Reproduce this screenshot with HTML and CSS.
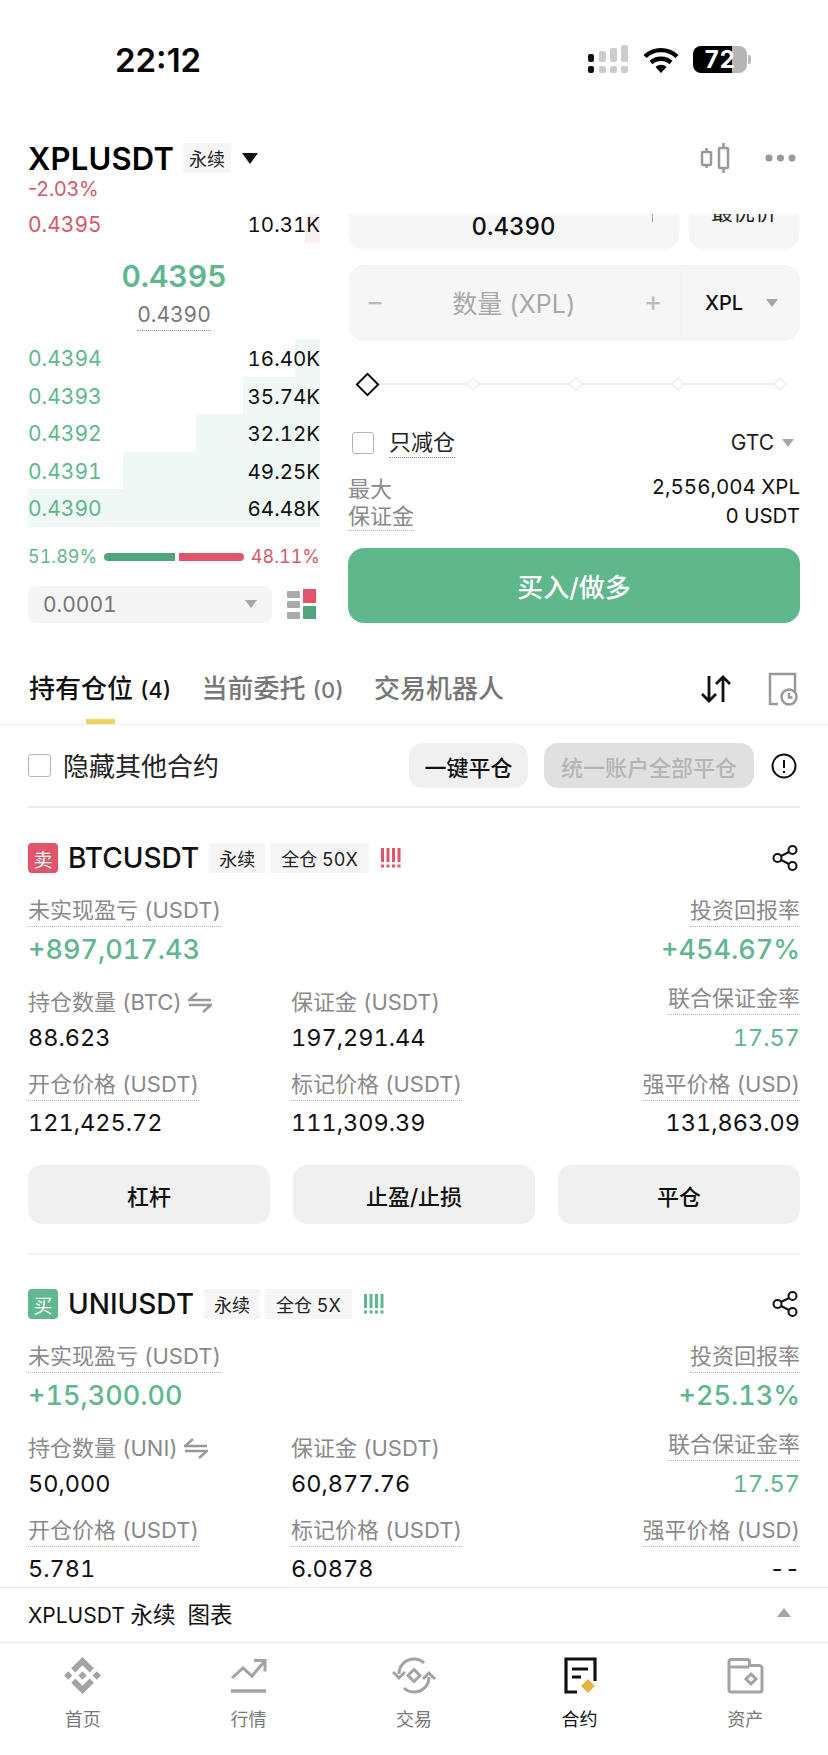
FILE: index.html
```html
<!DOCTYPE html>
<html lang="zh-CN">
<head>
<meta charset="utf-8">
<title>XPLUSDT</title>
<link rel="stylesheet" href="styles.css">
</head>
<body>
<div class="page">
  <div class="status">
    <span class="time">22:12</span>
    <div class="status-icons">
      <svg class="i-signal" width="40" height="28" viewBox="0 0 40 28">
        <rect x="0" y="9" width="6" height="8" rx="2" fill="#111"/><rect x="0" y="21" width="6" height="7" rx="2" fill="#111"/>
        <rect x="11" y="6" width="7" height="11" rx="2" fill="#ccc"/><rect x="11" y="21" width="7" height="7" rx="2" fill="#ccc"/>
        <rect x="22" y="3" width="7" height="14" rx="2" fill="#ccc"/><rect x="22" y="21" width="7" height="7" rx="2" fill="#ccc"/>
        <rect x="33" y="0" width="7" height="17" rx="2" fill="#ccc"/><rect x="33" y="21" width="7" height="7" rx="2" fill="#ccc"/>
      </svg>
      <svg class="i-wifi" width="36" height="26" viewBox="0 0 36 26">
        <path d="M2 9.5C11 1 25 1 34 9.5" fill="none" stroke="#000" stroke-width="4.4"/>
        <path d="M8 15.5C13.500 10.500 22.500 10.500 28 15.500" fill="none" stroke="#000" stroke-width="4.400"/>
        <path d="M12.500 20 18 26l5.500-6C20 17 16 17 12.500 20z" fill="#000"/>
      </svg>
      <div class="battery"><span class="battery-num">72</span></div>
      <span class="battery-nub"></span>
    </div>
  </div>

  <header class="head">
    <div class="head-row">
      <span class="symbol">XPLUSDT</span>
      <span class="tag tag-head">永续</span>
      <span class="tri-black"></span>
      <svg class="i-candle" width="30" height="30" viewBox="0 0 30 30" fill="none" stroke="#999" stroke-width="2.500">
        <rect x="2" y="9" width="9" height="13" rx="1"/><path d="M6.500 5v4M6.500 22v3"/>
        <rect x="19" y="5" width="9" height="20" rx="1"/><path d="M23.500 0v5M23.500 25v5"/>
      </svg>
      <svg class="i-more" width="31" height="8" viewBox="0 0 31 8" fill="#999"><circle cx="4" cy="4" r="3.500"/><circle cx="15.500" cy="4" r="3.500"/><circle cx="27" cy="4" r="3.500"/></svg>
    </div>
    <div class="change">-2.03%</div>
  </header>

  <section class="trade">
    <div class="book">
      <div class="ask">
        <span class="depth depth-red" style="width:15px"></span>
        <span class="px-red">0.4395</span><span class="qty">10.31K</span>
      </div>
      <div class="mid">0.4395</div>
      <div class="index"><span class="index-num">0.4390</span></div>
      <div class="bids">
        <div class="bid"><span class="depth" style="width:25px"></span><span class="px-green">0.4394</span><span class="qty">16.40K</span></div>
        <div class="bid"><span class="depth" style="width:77px"></span><span class="px-green">0.4393</span><span class="qty">35.74K</span></div>
        <div class="bid"><span class="depth" style="width:124px"></span><span class="px-green">0.4392</span><span class="qty">32.12K</span></div>
        <div class="bid"><span class="depth" style="width:197px"></span><span class="px-green">0.4391</span><span class="qty">49.25K</span></div>
        <div class="bid"><span class="depth" style="width:292px"></span><span class="px-green">0.4390</span><span class="qty">64.48K</span></div>
      </div>
      <div class="ratio">
        <span class="ratio-l">51.89%</span>
        <div class="ratio-bars"><span class="bar-g"></span><span class="bar-r"></span></div>
        <span class="ratio-r">48.11%</span>
      </div>
      <div class="precision">
        <div class="select"><span>0.0001</span><span class="tri-gray"></span></div>
        <svg width="29" height="30" viewBox="0 0 29 30">
          <rect x="0" y="2" width="13" height="7" rx="1" fill="#aaa"/><rect x="0" y="12" width="13" height="7" rx="1" fill="#aaa"/><rect x="0" y="23" width="13" height="7" rx="1" fill="#aaa"/>
          <rect x="16" y="0" width="13" height="14" fill="#e2546a"/><rect x="16" y="17" width="13" height="13" fill="#4fa67c"/>
        </svg>
      </div>
    </div>

    <div class="form">
      <div class="price-row">
        <div class="price-box">
          <span class="clip-plus"></span>
          <span class="price-val">0.4390</span>
        </div>
        <div class="best-box"><span class="best-text">最优价</span></div>
      </div>
      <div class="qty-box">
        <span class="step">−</span>
        <span class="qty-ph">数量 (XPL)</span>
        <span class="step">+</span>
        <div class="unit"><span>XPL</span><span class="tri-gray"></span></div>
      </div>
      <div class="slider">
        <span class="knob"></span><span class="track"></span>
        <span class="pip"></span><span class="track"></span>
        <span class="pip"></span><span class="track"></span>
        <span class="pip"></span><span class="track"></span>
        <span class="pip"></span>
      </div>
      <div class="opts">
        <span class="check check-form"></span>
        <span class="reduce">只减仓</span>
        <span class="gtc">GTC</span><span class="tri-gray tri-gtc"></span>
      </div>
      <div class="stat-row"><span class="stat-k">最大</span><span>2,556,004 XPL</span></div>
      <div class="stat-row"><span class="stat-k dot-under">保证金</span><span>0 USDT</span></div>
      <button class="buy">买入/做多</button>
    </div>
  </section>

  <nav class="tabs">
    <span class="tab tab-on">持有仓位 <span class="tab-n">(4)</span></span>
    <span class="tab">当前委托 <span class="tab-n">(0)</span></span>
    <span class="tab">交易机器人</span>
    <svg class="i-sort" width="32" height="28" viewBox="0 0 32 28" fill="none" stroke="#111" stroke-width="2.800">
      <path d="M9 1v25M2 19l7 7 7-7"/><path d="M23 27V2M16 9l7-7 7 7"/>
    </svg>
    <svg class="i-hist" width="30" height="34" viewBox="0 0 30 34" fill="none" stroke="#999" stroke-width="2.500">
      <path d="M10 32H2V2h25v19"/><circle cx="21" cy="25" r="7.500"/><path d="M21 21v4.500h3.500"/>
    </svg>
  </nav>

  <div class="filter">
    <span class="check check-big"></span>
    <span class="filter-text">隐藏其他合约</span>
    <button class="btn-close">一键平仓</button>
    <button class="btn-off">统一账户全部平仓</button>
    <svg width="26" height="26" viewBox="0 0 26 26" fill="none" stroke="#111" stroke-width="2"><circle cx="13" cy="13" r="11.500"/><path d="M13 7v8M13 18v2"/></svg>
  </div>

  <main class="positions">
    <article class="card">
      <div class="card-head">
        <span class="side side-sell">卖</span>
        <span class="pair">BTCUSDT</span>
        <span class="tag tag-a">永续</span>
        <span class="tag tag-b">全仓 50X</span>
        <svg class="risk" width="20" height="20" viewBox="0 0 20 20" fill="#e2546a"><rect x="0" y="0" width="3" height="14"/><rect x="5.500" y="0" width="3" height="14"/><rect x="11" y="0" width="3" height="14"/><rect x="16.500" y="0" width="3" height="14"/><rect x="0" y="16.500" width="3" height="3"/><rect x="5.500" y="16.500" width="3" height="3"/><rect x="11" y="16.500" width="3" height="3"/><rect x="16.500" y="16.500" width="3" height="3"/></svg>
        <svg class="share" width="26" height="26" viewBox="0 0 26 26" fill="none" stroke="#111" stroke-width="2"><circle cx="5.500" cy="13" r="4"/><circle cx="20.500" cy="5" r="4"/><circle cx="20.500" cy="21" r="4"/><path d="M9 11l8-4M9 15l8 4"/></svg>
      </div>
      <div class="top-row">
        <div><div class="lbl"><span class="dot-under">未实现盈亏 (USDT)</span></div><div class="val big green">+897,017.43</div></div>
        <div class="right"><div class="lbl"><span class="dot-under">投资回报率</span></div><div class="val big green">+454.67%</div></div>
      </div>
      <div class="grid">
        <div><div class="lbl lbl-plain">持仓数量 (BTC) <svg class="swap" width="24" height="22" viewBox="0 0 24 22" fill="none" stroke="#999" stroke-width="2.400"><path d="M9 2 1 9h22M1 14h22l-8 7"/></svg></div><div class="val">88.623</div></div>
        <div><div class="lbl lbl-plain">保证金 (USDT)</div><div class="val">197,291.44</div></div>
        <div class="right"><div class="lbl"><span class="dot-under">联合保证金率</span></div><div class="val green">17.57</div></div>
        <div><div class="lbl"><span class="dot-under">开仓价格 (USDT)</span></div><div class="val">121,425.72</div></div>
        <div><div class="lbl"><span class="dot-under">标记价格 (USDT)</span></div><div class="val">111,309.39</div></div>
        <div class="right"><div class="lbl"><span class="dot-under">强平价格 (USD)</span></div><div class="val">131,863.09</div></div>
      </div>
      <div class="actions"><button class="act">杠杆</button><button class="act">止盈/止损</button><button class="act">平仓</button></div>
    </article>

    <article class="card">
      <div class="card-head">
        <span class="side side-buy">买</span>
        <span class="pair">UNIUSDT</span>
        <span class="tag tag-a">永续</span>
        <span class="tag tag-b">全仓 5X</span>
        <svg class="risk" width="20" height="20" viewBox="0 0 20 20" fill="#5fb78f"><rect x="0" y="0" width="3" height="14"/><rect x="5.500" y="0" width="3" height="14"/><rect x="11" y="0" width="3" height="14"/><rect x="16.500" y="0" width="3" height="14"/><rect x="0" y="16.500" width="3" height="3"/><rect x="5.500" y="16.500" width="3" height="3"/><rect x="11" y="16.500" width="3" height="3"/><rect x="16.500" y="16.500" width="3" height="3"/></svg>
        <svg class="share" width="26" height="26" viewBox="0 0 26 26" fill="none" stroke="#111" stroke-width="2"><circle cx="5.500" cy="13" r="4"/><circle cx="20.500" cy="5" r="4"/><circle cx="20.500" cy="21" r="4"/><path d="M9 11l8-4M9 15l8 4"/></svg>
      </div>
      <div class="top-row">
        <div><div class="lbl"><span class="dot-under">未实现盈亏 (USDT)</span></div><div class="val big green">+15,300.00</div></div>
        <div class="right"><div class="lbl"><span class="dot-under">投资回报率</span></div><div class="val big green">+25.13%</div></div>
      </div>
      <div class="grid">
        <div><div class="lbl lbl-plain">持仓数量 (UNI) <svg class="swap" width="24" height="22" viewBox="0 0 24 22" fill="none" stroke="#999" stroke-width="2.400"><path d="M9 2 1 9h22M1 14h22l-8 7"/></svg></div><div class="val">50,000</div></div>
        <div><div class="lbl lbl-plain">保证金 (USDT)</div><div class="val">60,877.76</div></div>
        <div class="right"><div class="lbl"><span class="dot-under">联合保证金率</span></div><div class="val green">17.57</div></div>
        <div><div class="lbl"><span class="dot-under">开仓价格 (USDT)</span></div><div class="val">5.781</div></div>
        <div><div class="lbl"><span class="dot-under">标记价格 (USDT)</span></div><div class="val">6.0878</div></div>
        <div class="right"><div class="lbl"><span class="dot-under">强平价格 (USD)</span></div><div class="val">--</div></div>
      </div>
    </article>
  </main>

  <div class="chart-bar"><span>XPLUSDT <span class="cn">永续&nbsp; 图表</span></span><span class="tri-up"></span></div>

  <footer class="nav">
    <div class="nav-item">
      <svg width="37" height="37" viewBox="0 0 126.610 126.610" fill="#a3a3a3"><path d="M38.730 53.200 63.310 28.620 87.900 53.210l14.300-14.300L63.310 0 24.430 38.900zM0 63.310l14.300-14.300 14.300 14.300-14.300 14.300zM38.730 73.410 63.310 97.990 87.900 73.400l14.310 14.290-.01.01L63.310 126.610 24.430 87.730l-.02-.02zM98.010 63.310l14.300-14.300 14.300 14.300-14.300 14.300zM77.820 63.300 63.310 48.790 52.580 59.520l-1.230 1.230-2.540 2.540 14.500 14.500 14.510-14.500z"/></svg>
      <span>首页</span>
    </div>
    <div class="nav-item">
      <svg width="37" height="37" viewBox="0 0 37 37" fill="none" stroke="#a3a3a3" stroke-width="3"><path d="M2 21 13 11l9 8L34 5"/><path d="M24 3.500h11v11"/><path d="M1 34h35" stroke-width="3.500"/></svg>
      <span>行情</span>
    </div>
    <div class="nav-item">
      <svg width="44" height="37" viewBox="0 0 44 37" fill="none" stroke="#a3a3a3" stroke-width="3"><path d="M7 17C7 8 14 2 22 2c4 0 7 1 10 4"/><path d="M37 20c0 9-7 15-15 15-4 0-7-1-10-4"/><path d="M1 15l6 6 6-6M31 22l6-6 6 6"/><path d="M22 12.500l6 6-6 6-6-6z"/></svg>
      <span>交易</span>
    </div>
    <div class="nav-item nav-on">
      <svg width="37" height="37" viewBox="0 0 37 37" fill="none"><path d="M16 35H5V2h29v22" stroke="#111" stroke-width="3.200"/><path d="M11 12h16M11 20h9" stroke="#111" stroke-width="3"/><path d="M27 22l7 7-7 7-7-7z" fill="#e5b546"/></svg>
      <span>合约</span>
    </div>
    <div class="nav-item">
      <svg width="37" height="37" viewBox="0 0 37 37" fill="none" stroke="#a3a3a3" stroke-width="3"><path d="M2 33V5c0-1.500 1-2.500 2.500-2.500H20c1.500 0 2.500 1 2.500 2.500v3.500H32c1.500 0 3 1 3 2.500v22c0 1-1 2-2.500 2h-28C3 35 2 34 2 33z"/><path d="M2 10h20"/><path d="M24 17l5 5-5 5-5-5z"/></svg>
      <span>资产</span>
    </div>
  </footer>
</div>
</body>
</html>
```

FILE: styles.css
```css
* { box-sizing: border-box; margin: 0; padding: 0; }
html, body { background: #fff; }
body {
  width: 828px;
  height: 1755px;
  overflow: hidden;
  font-family: Inter, "Noto Sans CJK SC", sans-serif;
  font-variant-numeric: tabular-nums;
  color: #111;
}
button { font-family: inherit; border: 0; }
.page { width: 828px; height: 1755px; display: flex; flex-direction: column; overflow: hidden; }

/* status bar */
.status { height: 134px; flex: none; display: flex; align-items: flex-start; padding: 40px 77px 0 115px; justify-content: space-between; }
.time { font-size: 33px; line-height: 40px; font-weight: 600; color: #000; font-variant-numeric: normal; }
.status-icons { display: flex; align-items: flex-start; margin-top: 5px; }
.i-signal { display: block; }
.i-wifi { display: block; margin: 2px 0 0 15px; }
.battery { width: 54px; height: 27px; margin: 1px 0 0 14px; border-radius: 8px; background: linear-gradient(90deg, #000 0 39px, #b5b5b5 39px); display: flex; align-items: center; padding-left: 11px; }
.battery-num { color: #fff; font-size: 24px; line-height: 27px; font-weight: 700; }
.battery-nub { width: 3px; height: 9px; margin: 10px 0 0 1px; background: #bbb; border-radius: 0 2px 2px 0; }

/* header */
.head { height: 80px; flex: none; padding: 0 28px; }
.head-row { height: 48px; display: flex; align-items: center; }
.symbol { font-size: 31px; font-weight: 600; letter-spacing: 0.2px; color: #000; }
.tag { background: #f6f6f6; font-size: 18px; height: 30px; display: inline-flex; align-items: center; justify-content: center; color: #222; }
.tag-head { width: 48px; margin-left: 9px; }
.tri-black { width: 0; height: 0; border-left: 8.500px solid transparent; border-right: 8.500px solid transparent; border-top: 11px solid #111; margin-left: 11px; }
.i-candle { margin-left: auto; }
.i-more { margin-left: 35px; margin-right: 4px; }
.change { font-size: 20px; line-height: 14px; color: #d6596e; font-variant-numeric: normal; }

/* trade */
.trade { height: 410px; flex: none; display: grid; grid-template-columns: 292px 452px; column-gap: 28px; padding-left: 28px; }
.book { display: flex; flex-direction: column; }
.ask, .bid { position: relative; display: flex; justify-content: space-between; font-size: 21px; }
.ask { height: 29px; line-height: 22px; }
.bid { height: 37.600px; line-height: 39.600px; }
.ask span:not(.depth), .bid span:not(.depth) { position: relative; }
.depth { position: absolute; top: 0; bottom: 0; right: 0; background: #eff8f4; }
.depth-red { background: #fdeef0; }
.px-red { color: #d6596e; }
.px-green { color: #5fb78f; }
.qty { color: #111; font-size: 20.500px; }
.mid { margin-top: 15px; text-align: center; font-size: 30px; line-height: 36px; font-weight: 600; color: #5fb78f; }
.index { margin-top: 9px; text-align: center; height: 28px; }
.index-num { display: inline-block; font-size: 21px; line-height: 24px; padding-bottom: 3px; color: #777; border-bottom: 1px dotted #999; }
.bids { margin-top: 8px; }
.ratio { margin-top: 20px; height: 20px; display: flex; align-items: center; font-size: 18px; }
.ratio-l { width: 76px; color: #5fb78f; }
.ratio-r { width: 76px; color: #d6596e; text-align: right; }
.ratio-bars { width: 140px; display: flex; gap: 4px; }
.bar-g { flex: 71; height: 8px; background: #4fa67c; border-radius: 4px 0 0 4px; }
.bar-r { flex: 65; height: 8px; background: #e2546a; border-radius: 0 4px 4px 0; }
.precision { margin-top: 19px; display: flex; align-items: center; gap: 15px; }
.select { width: 244px; height: 37px; border-radius: 8px; background: #f5f5f5; display: flex; align-items: center; justify-content: space-between; padding: 0 15px; font-size: 21px; color: #777; }
.tri-gray { width: 0; height: 0; border-left: 6.500px solid transparent; border-right: 6.500px solid transparent; border-top: 8px solid #a6a6a6; }

.form { display: flex; flex-direction: column; }
.price-row { display: flex; gap: 10px; height: 36px; }
.price-box, .best-box { background: #f6f6f6; border-radius: 0 0 16px 16px; overflow: hidden; height: 36px; }
.price-box { width: 331px; position: relative; text-align: center; }
.clip-plus { position: absolute; left: 304px; top: 0; width: 1px; height: 8px; background: #aaa; }
.price-val { font-size: 24px; line-height: 26px; font-weight: 500; display: block; }
.best-box { width: 110px; text-align: center; }
.best-text { display: block; font-size: 22px; line-height: 22px; margin-top: -13px; color: #222; }
.qty-box { margin-top: 15px; height: 76px; background: #f6f6f6; border-radius: 16px; display: flex; align-items: center; padding-left: 18px; }
.step { color: #bbb; font-size: 28px; width: 18px; text-align: center; margin-top: -4px; }
.qty-ph { width: 260px; text-align: center; font-size: 25px; color: #a8a8a8; margin-top: -3px; }
.unit { margin-left: 18px; height: 66px; flex: 1; border-left: 1px solid #efefef; display: flex; align-items: center; justify-content: space-between; padding: 0 22px 0 24px; font-size: 20px; color: #111; font-weight: 500; }
.slider { margin-top: 31px; height: 24px; display: flex; align-items: center; padding: 0 15px 0 11px; }
.knob { width: 17px; height: 17px; border: 2px solid #111; transform: rotate(45deg) scale(1); background: #fff; flex: none; }
.pip { width: 10px; height: 10px; border: 1px solid #e6e6e6; transform: rotate(45deg); background: #fff; flex: none; }
.track { flex: 1; height: 2px; background: #efefef; }
.opts { margin-top: 34px; height: 30px; display: flex; align-items: flex-start; padding-left: 4px; }
.check { display: block; border: 1.500px solid #b5b5b5; border-radius: 3px; flex: none; background: #fff; }
.check-form { width: 22px; height: 22px; margin-top: 2px; }
.reduce { margin-left: 15px; font-size: 22px; line-height: 24px; padding-bottom: 3px; border-bottom: 1px dotted #888; color: #222; }
.gtc { margin-left: auto; font-size: 21px; line-height: 26px; color: #222; }
.tri-gtc { margin: 9px 6px 0 8px; }
.stat-row { height: 29px; display: flex; justify-content: space-between; align-items: center; font-size: 20.500px; color: #111; }
.opts + .stat-row { margin-top: 12px; }
.stat-k { color: #8a8a8a; font-size: 22px; }
.dot-under { display: inline-block; padding-bottom: 3px; border-bottom: 1px dotted #b5b5b5; }
.stat-k.dot-under { line-height: 26px; margin-top: 3px; padding-bottom: 1px; }
.buy { margin-top: 18px; height: 75px; width: 452px; border-radius: 16px; background: #5fb88c; color: #fff; font-size: 26px; font-weight: 500; }

/* tabs */
.tabs { height: 101px; flex: none; padding: 48px 28px 0 29px; border-bottom: 1px solid #eee; display: flex; align-items: flex-start; gap: 30px; }
.tab { position: relative; font-size: 26px; line-height: 34px; color: #777; font-weight: 500; }
.tab-on { color: #111; }
.tab-n { font-size: 22px; }
.tab-on::after { content: ""; position: absolute; left: 57px; top: 47px; width: 29px; height: 5px; background: #f0d35d; }
.i-sort { margin: 3px 2px 0 auto; }
.i-hist { margin: 0 2px 0 4px; }

.filter { height: 83px; flex: none; margin: 0 28px; border-bottom: 2px solid #eee; display: flex; align-items: center; }
.check-big { width: 23px; height: 23px; }
.filter-text { margin: -2px 0 0 12px; font-size: 26px; color: #222; }
.btn-close, .btn-off { height: 45px; border-radius: 14px; font-size: 22px; font-weight: 500; }
.btn-close { margin-left: auto; width: 119px; background: #f0f0f0; color: #111; }
.btn-off { margin-left: 16px; width: 210px; background: #e0e0e0; color: #b5b5b5; }
.filter svg { margin-left: 17px; margin-right: 3px; }

/* positions */
.positions { flex: 1; min-height: 0; overflow: hidden; padding: 0 28px; }
.card { padding-top: 35px; }
.card + .card { border-top: 2px solid #f3f3f3; padding-top: 34px; }
.card-head { display: flex; align-items: center; height: 30px; }
.side { width: 30px; height: 30px; border-radius: 4px; color: #fff; font-size: 19px; display: flex; align-items: center; justify-content: center; flex: none; }
.side-sell { background: #e2546a; }
.side-buy { background: #5fb78f; }
.pair { margin-left: 10px; font-size: 28px; font-weight: 500; color: #111; }
.tag-a { width: 56px; margin-left: 10px; }
.tag-b { padding: 0 11px; margin-left: 5px; }
.risk { margin-left: 12px; }
.share { margin-left: auto; margin-right: 2px; }
.top-row { margin-top: 24px; display: flex; justify-content: space-between; }
.lbl { font-size: 22px; line-height: 26px; height: 30px; color: #8a8a8a; white-space: nowrap; }
.lbl-plain { padding-top: 4px; display: flex; align-items: center; gap: 6px; }
.val { margin-top: 3px; font-size: 23.500px; line-height: 40px; color: #111; }
.big { font-size: 27px; font-weight: 500; }
.green { color: #5fb78f; }
.right { text-align: right; }
.grid { margin-top: 15px; display: grid; grid-template-columns: 263px 1fr auto; row-gap: 13px; }
.grid > :nth-child(n+4) .val { margin-top: 2px; }
.actions { margin-top: 22px; margin-bottom: 29px; display: grid; grid-template-columns: repeat(3, 1fr); column-gap: 23px; }
.act { height: 59px; border-radius: 14px; background: #f0f0f0; font-size: 22px; font-weight: 500; color: #111; }

/* bottom */
.chart-bar { height: 54px; flex: none; border-top: 1px solid #e8e8e8; display: flex; align-items: center; justify-content: space-between; padding: 0 28px 4px; font-size: 21px; color: #111; }
.cn { font-size: 22.500px; }
.tri-up { width: 0; height: 0; border-left: 7px solid transparent; border-right: 7px solid transparent; border-bottom: 9px solid #a6a6a6; margin-right: 9px; }
.nav { height: 114px; flex: none; border-top: 3px solid #f5f5f5; display: grid; grid-template-columns: repeat(5, 165.600px); }
.nav-item { display: flex; flex-direction: column; align-items: center; padding-top: 13px; font-size: 18px; color: #777; }
.nav-item span { margin-top: 13px; line-height: 26px; }
.nav-on { color: #111; }
```
